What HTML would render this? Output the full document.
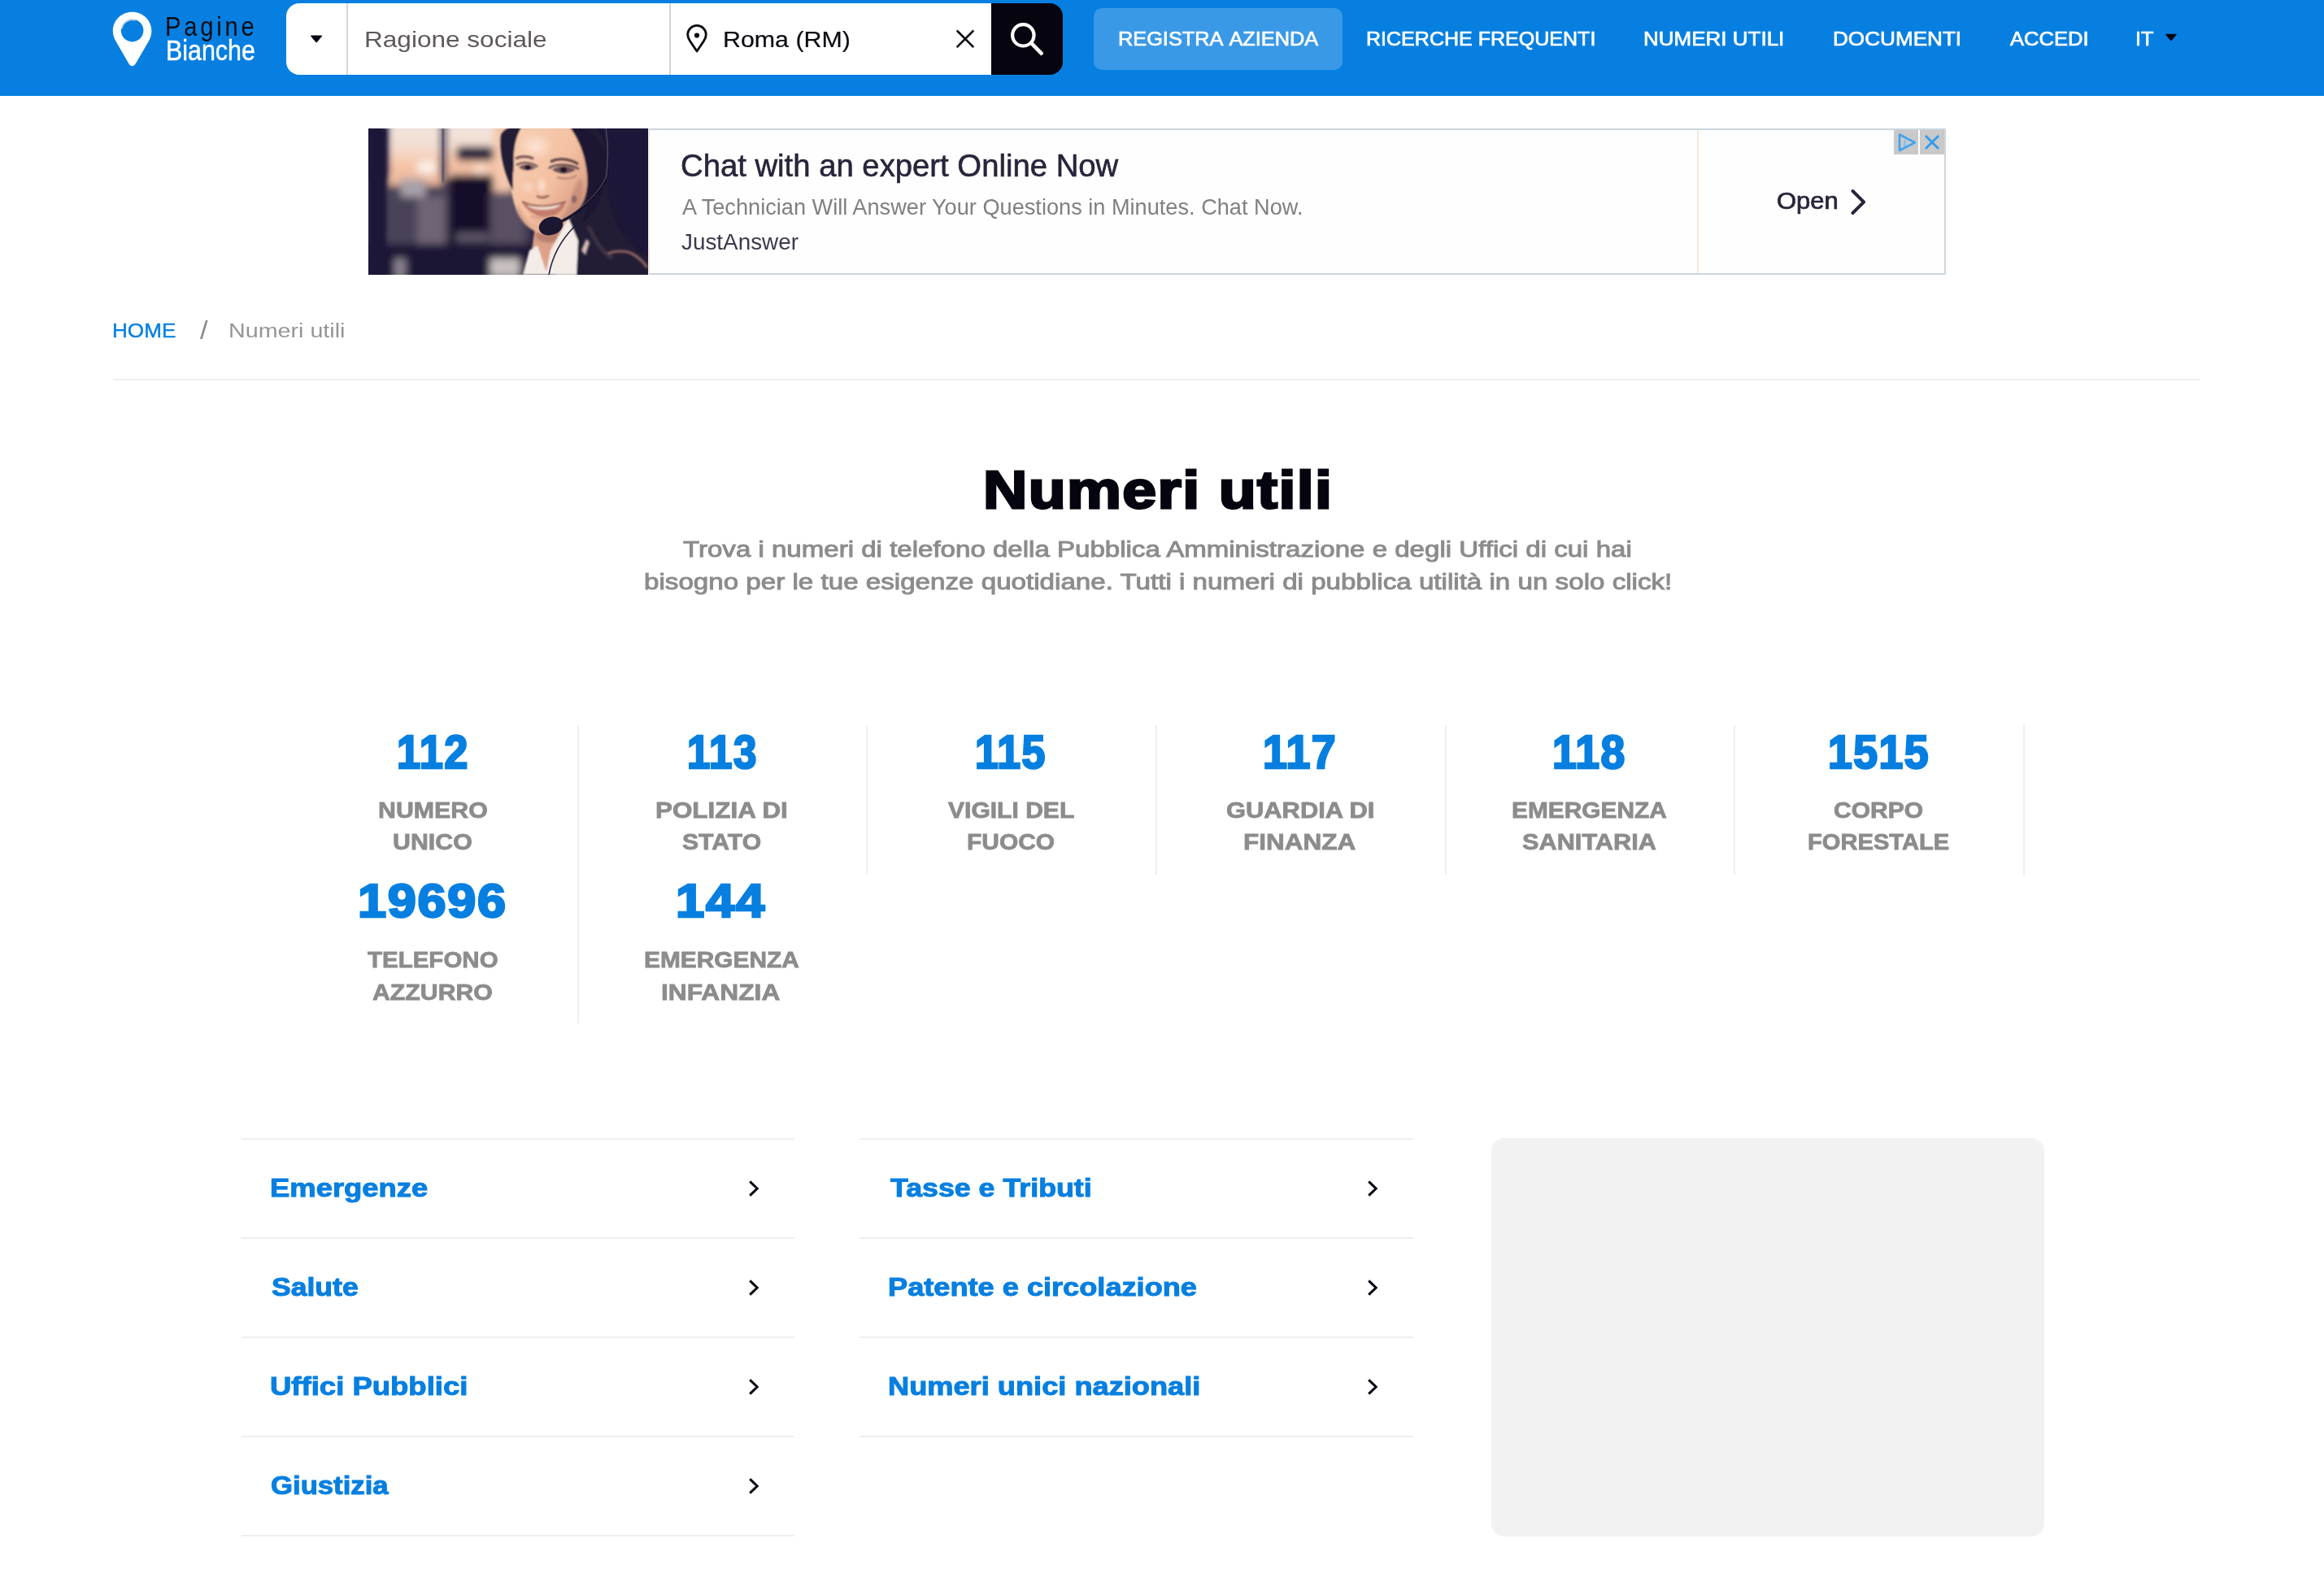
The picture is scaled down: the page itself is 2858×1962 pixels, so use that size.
<!DOCTYPE html>
<html lang="it"><head><meta charset="utf-8"><title>Numeri utili - PagineBianche</title>
<style>
*{margin:0;padding:0;box-sizing:border-box}
html,body{width:2858px;height:1962px;overflow:hidden;background:#fff}
@media (max-width:1600px){html{zoom:.5}}
body{position:relative;font-family:"Liberation Sans",sans-serif}
.a{position:absolute}
.t{position:absolute;white-space:nowrap;transform-origin:0 50%;display:block}
.hl{position:absolute;height:2px;background:#efefef}
.vl{position:absolute;width:2px;background:#efefef}
svg{position:absolute;overflow:visible}
</style></head>
<body>
<header class="a" style="left:0;top:0;width:2858px;height:118px;background:#067fe0">
<svg style="left:130px;top:8px" width="70" height="84" viewBox="130 8 70 84">
<path d="M162.6 14.7c-13.2 0-23.8 10.4-23.8 23.4 0 5.2 1.7 9.3 4.2 13.6l15.2 26.3c1 1.8 2.6 3.2 4.4 3.2s3.4-1.4 4.4-3.2l15.2-26.3c2.500-4.300 4.200-8.400 4.200-13.600 0-13-10.600-23.400-23.800-23.400z" fill="#fff"/>
<circle cx="162.6" cy="37.6" r="13.8" fill="#067fe0"/>
<path d="M149.6 35.5a13.6 13.6 0 0 1 17-10.800" fill="none" stroke="#c9d4de" stroke-width="1.6"/>
</svg>
<div class="a" style="left:352px;top:4px;width:868px;height:88px;background:#fff;border-radius:16px 0 0 16px"></div>
<div class="a" style="left:1219px;top:4px;width:88px;height:88px;background:#06040f;border-radius:0 16px 16px 0"></div>
<div class="a" style="left:426px;top:4px;width:2px;height:88px;background:#d1d7de"></div>
<div class="a" style="left:823px;top:4px;width:2px;height:88px;background:#d1d7de"></div>
<svg style="left:380px;top:42px" width="18" height="12" viewBox="380 42 18 12"><path d="M383 44.200h12.200l-6.100 7.300z" fill="#06040f" stroke="#06040f" stroke-width="1.6" stroke-linejoin="round"/></svg>
<svg style="left:840px;top:26px" width="34" height="44" viewBox="840 26 34 44">
<path d="M857 31.400c-6.300 0-11.300 5-11.300 11.200 0 3.400 1.400 5.700 3 8.100l8.300 12.300 8.300-12.300c1.600-2.400 3-4.700 3-8.100 0-6.200-5-11.200-11.300-11.200z" fill="none" stroke="#0b0b12" stroke-width="2.800" stroke-linejoin="round"/>
<circle cx="857" cy="43.500" r="3.100" fill="#0b0b12"/></svg>
<svg style="left:1170px;top:32px" width="34" height="32" viewBox="1170 32 34 32"><path d="M1176.700 37.500l20.600 20.600M1197.300 37.500l-20.600 20.600" stroke="#0b0b12" stroke-width="2.600" fill="none"/></svg>
<svg style="left:1236px;top:24px" width="56" height="52" viewBox="1236 24 56 52"><circle cx="1258.300" cy="43.300" r="13.200" fill="none" stroke="#fff" stroke-width="4.200"/><path d="M1268.300 53l12.300 12.700" stroke="#fff" stroke-width="4.600" stroke-linecap="round"/></svg>
<div class="a" style="left:1345px;top:10px;width:306px;height:76px;border-radius:10px;background:#3a99e7"></div>
<svg style="left:2660px;top:40px" width="20" height="12" viewBox="2660 40 20 12"><path d="M2663.800 42.400h12.200l-6.100 7.200z" fill="#06040f" stroke="#06040f" stroke-width="1.400" stroke-linejoin="round"/></svg>
<nav>
<span class="t" style="left:203.36px;top:15.53px;font-size:33.87px;line-height:33.87px;color:#0b0b12;letter-spacing:4.432px;transform:scaleX(0.8600);">Pagine</span>
<span class="t" style="left:203.64px;top:44.30px;font-size:35.32px;line-height:35.32px;color:#ffffff;-webkit-text-stroke:0.5px #ffffff;transform:scaleX(0.8606);">Bianche</span>
<span class="t" style="left:447.97px;top:33.68px;font-size:28.49px;line-height:28.49px;color:#5f585b;transform:scaleX(1.1079);">Ragione sociale</span>
<span class="t" style="left:889.28px;top:34.23px;font-size:28.2px;line-height:28.2px;color:#0b0b12;-webkit-text-stroke:0.2px #0b0b12;transform:scaleX(1.0774);">Roma (RM)</span>
<span class="t" style="left:1374.51px;top:36.64px;font-size:23.69px;line-height:23.69px;color:#ffffff;-webkit-text-stroke:0.7px #ffffff;transform:scaleX(1.0689);font-kerning:none;">REGISTRA AZIENDA</span>
<span class="t" style="left:1680.34px;top:36.64px;font-size:23.69px;line-height:23.69px;color:#ffffff;-webkit-text-stroke:0.7px #ffffff;transform:scaleX(1.0569);font-kerning:none;">RICERCHE FREQUENTI</span>
<span class="t" style="left:2021.06px;top:36.64px;font-size:23.69px;line-height:23.69px;color:#ffffff;-webkit-text-stroke:0.7px #ffffff;transform:scaleX(1.0974);font-kerning:none;">NUMERI UTILI</span>
<span class="t" style="left:2253.66px;top:36.64px;font-size:23.69px;line-height:23.69px;color:#ffffff;-webkit-text-stroke:0.7px #ffffff;transform:scaleX(1.1023);font-kerning:none;">DOCUMENTI</span>
<span class="t" style="left:2471.73px;top:36.64px;font-size:23.69px;line-height:23.69px;color:#ffffff;-webkit-text-stroke:0.7px #ffffff;transform:scaleX(1.0792);font-kerning:none;">ACCEDI</span>
<span class="t" style="left:2626.33px;top:36.64px;font-size:23.69px;line-height:23.69px;color:#ffffff;-webkit-text-stroke:0.7px #ffffff;transform:scaleX(1.0649);font-kerning:none;">IT</span>
</nav>
</header>
<main>
<aside>
<div class="a" style="left:797px;top:158px;width:1596px;height:180px;border:2px solid #ccd5de;border-left:2px solid #f6e6dc;background:#fefefe"></div>
<div class="a" style="left:2087px;top:160px;width:2px;height:176px;background:#f6e8df"></div>
<div class="a" style="left:453px;top:158px;width:344px;height:180px;background:#1c1838;overflow:hidden"><svg style="left:0;top:0" width="344" height="180" viewBox="0 0 344 180">
<defs>
<filter id="b6" x="-20%" y="-20%" width="140%" height="140%"><feGaussianBlur stdDeviation="5"/></filter>
<filter id="b3" x="-20%" y="-20%" width="140%" height="140%"><feGaussianBlur stdDeviation="2.500"/></filter>
<filter id="b2" x="-20%" y="-20%" width="140%" height="140%"><feGaussianBlur stdDeviation="1.800"/></filter>
<filter id="b1" x="-20%" y="-20%" width="140%" height="140%"><feGaussianBlur stdDeviation="0.900"/></filter>
<linearGradient id="win" x1="0" y1="0" x2="0" y2="1"><stop offset="0" stop-color="#f1e7e1"/><stop offset=".42" stop-color="#f3dccf"/><stop offset=".68" stop-color="#f6c4a6"/><stop offset="1" stop-color="#e9b79d"/></linearGradient>
<linearGradient id="face" x1="0" y1="0" x2="1" y2=".9"><stop offset="0" stop-color="#f8cfb4"/><stop offset=".55" stop-color="#f3c0a1"/><stop offset="1" stop-color="#cf9079"/></linearGradient>
<radialGradient id="hl" cx=".5" cy=".5" r=".5"><stop offset="0" stop-color="#fde6d8" stop-opacity=".9"/><stop offset="1" stop-color="#fde6d8" stop-opacity="0"/></radialGradient>
</defs>
<rect width="344" height="180" fill="#1b1739"/>
<!-- blurred office background -->
<g filter="url(#b6)">
<rect x="0" y="60" width="200" height="90" fill="#4a4258"/>
<rect x="24" y="-8" width="66" height="78" fill="url(#win)"/>
<rect x="95" y="-8" width="60" height="70" fill="url(#win)"/>
<rect x="154" y="-8" width="24" height="86" fill="#f4c8ad"/>
<rect x="108" y="22" width="46" height="18" rx="6" fill="#1f1a3a"/>
<ellipse cx="72" cy="48" rx="13" ry="9" fill="#fbeee6"/>
<ellipse cx="138" cy="50" rx="9" ry="7" fill="#f9dcc8"/>
<rect x="40" y="62" width="30" height="22" fill="#a8a0a8"/>
<rect x="99" y="57" width="55" height="90" rx="6" fill="#120e2c"/>
<rect x="60" y="84" width="34" height="60" fill="#6f6474"/>
<rect x="150" y="80" width="40" height="66" fill="#5a5064"/>
<rect x="0" y="142" width="200" height="50" fill="#1a1536"/>
<rect x="150" y="160" width="36" height="22" fill="#c9c1c0"/>
<rect x="32" y="160" width="14" height="24" fill="#8a8290"/>
<rect x="108" y="128" width="40" height="12" fill="#5c5366"/>
</g>
<rect x="0" y="0" width="22" height="180" fill="#1b1739" filter="url(#b3)"/>
<rect x="90.500" y="0" width="2.500" height="66" fill="#4d4860" filter="url(#b1)"/>
<g filter="url(#b1)">
<!-- hair mass behind -->
<path d="M164 10c2-8 12-14 26-14h76c18 0 28 18 28 44 0 26 4 46 12 66 8 20 18 34 38 52v30h-112l-14-62-30-38c-14-18-26-52-24-78z" fill="#221c34"/>
<path d="M296 70c4 30 14 60 44 84v-154h-50c4 20 4 46 6 70z" fill="#1b1739" filter="url(#b3)"/>
<!-- neck -->
<path d="M205 120l38-8 12 68h-58z" fill="#dda187"/>
<path d="M205 126c10 6 24 4 36-8l2 16c-12 8-26 8-36 2z" fill="#b87f6c" filter="url(#b2)"/>
<!-- collar -->
<path d="M190 180l8-30 10-6 12 36z" fill="#f4ece7"/>
<path d="M218 180l6-30 22-40 12 28-2 42z" fill="#f4ece7"/>
<!-- face -->
<path d="M179 43c-1-16 2-32 9-44h62c10 10 18 26 19 44 1 12 1 24-1 35-2 10-6 18-12 24-6 6-12 10-18 12l-12 12c-5 3-12 4-18 2-8-3-16-10-22-20-6-10-8-20-10-30-1-10 3-22 3-35z" fill="url(#face)"/>
<ellipse cx="206" cy="22" rx="22" ry="18" fill="url(#hl)"/>
<ellipse cx="213" cy="70" rx="7" ry="12" fill="url(#hl)"/>
<ellipse cx="196" cy="72" rx="10" ry="8" fill="url(#hl)" opacity=".6"/>
<!-- cheek shadow right -->
<path d="M262 60c4 14 2 30-6 42-6 8-14 12-22 14 8-10 14-20 16-32 2-10 6-18 12-24z" fill="#b9806e" opacity=".55" filter="url(#b2)"/>
<path d="M184 92c4 12 12 24 22 32-10-2-20-10-24-22z" fill="#c58c78" opacity=".5" filter="url(#b2)"/>
<!-- hair strands front -->
<path d="M163 8c4-8 14-12 28-12-8 8-12 20-13 34-1 14 0 30 0 46-8-14-18-42-15-68z" fill="#241d36"/>
<path d="M246-4c22 2 40 12 44 36 3 20 2 44-10 66-4 8-10 14-18 18 6-12 8-26 8-40 0-30-6-56-24-80z" fill="#1f1930"/>
</g>
<!-- eyes brows nose mouth -->
<g filter="url(#b1)">
<path d="M181 37c7-3 15-3 22 0" stroke="#6b4a4a" stroke-width="2.600" fill="none"/>
<path d="M185 47.500c5-4 14-4 21 .5-5 4-16 5-21-.5z" fill="#5a4048" opacity=".85"/>
<ellipse cx="196" cy="48" rx="3.600" ry="3" fill="#1f1626"/>
<path d="M182 45c6-4 18-4 26 2" stroke="#2a1f2e" stroke-width="1.600" fill="none"/>
<path d="M224 41c10-5 24-4 34 3" stroke="#5a3d42" stroke-width="3" fill="none"/>
<path d="M226 50.500c7-5.500 20-5.500 29 0-7 6-21 7-29 0z" fill="#5a4048" opacity=".85"/>
<ellipse cx="240" cy="51" rx="4.200" ry="3.400" fill="#1f1626"/>
<path d="M222 49c8-6 26-6 37 1" stroke="#2a1f2e" stroke-width="1.800" fill="none"/>
<path d="M232 60c8 3 18 2 24-2" stroke="#a36d62" stroke-width="2" fill="none" opacity=".8"/>
<path d="M207 83c4 2.500 10 2.500 15-.5" stroke="#8f5e55" stroke-width="2.400" fill="none"/>
<path d="M189 90c8 5 18 6 26 5 10-1 20-2 27-4-2 10-12 18-24 18s-24-8-29-19z" fill="#c47c6c"/>
<path d="M195 94c14 4 28 3 42-1-4 5-12 7-22 7s-16-2-20-6z" fill="#f2d9cf"/>
<path d="M189 90c10 5 22 6 32 5 8-1 15-2 22-5" stroke="#7a4a48" stroke-width="1.400" fill="none"/>
<path d="M200 108c8 3 18 3 26-1" stroke="#d89c88" stroke-width="3" fill="none" opacity=".8"/>
<ellipse cx="253" cy="87" rx="3" ry="4.500" fill="#5a4450" opacity=".55"/>
</g>
<!-- headset -->
<path d="M292 0c3 20 3 42 0 62" stroke="#4a445c" stroke-width="1.600" fill="none"/>
<path d="M236 115c22-10 46-32 56-53" stroke="#15112a" stroke-width="3.200" fill="none"/>
<path d="M238 112c20-10 44-30 53-50" stroke="#6a6278" stroke-width=".9" fill="none"/>
<ellipse cx="224.500" cy="120" rx="15" ry="11" transform="rotate(-16 224.500 120)" fill="#1b1631"/>
<path d="M222 180c4-22 14-42 32-60" stroke="#1a1530" stroke-width="1.500" fill="none"/>
<g filter="url(#b2)">
<path d="M294 154c10-4 22-4 30 0 8 4 14 10 19 17" stroke="#a8766c" stroke-width="2.600" fill="none"/>
<path d="M270 120c8 14 14 30 30 40" stroke="#4a3a4a" stroke-width="5" fill="none" opacity=".7"/>
<path d="M262 150l6-14 4 4-5 16z" fill="#d8c0b8"/>
</g>
</svg>
</div>
<div class="a" style="left:2329px;top:160px;width:30px;height:30px;background:#c9c9c9"></div>
<div class="a" style="left:2361px;top:160px;width:30px;height:30px;background:#c9c9c9"></div>
<svg style="left:2329px;top:160px" width="62" height="30" viewBox="0 0 62 30"><path d="M7 5.500v19.500l19-9.700z" fill="none" stroke="#3ea2f0" stroke-width="2.600" stroke-linejoin="round"/><path d="M13.500 12v8" stroke="#7cc0f5" stroke-width="2.400"/><path d="M39 7l16 16M55 7l-16 16" stroke="#2f9cf0" stroke-width="2.800"/></svg>
<svg style="left:2270px;top:228px" width="30" height="40" viewBox="2270 228 30 40"><path d="M2278.500 235l13.500 13.500-13.500 13.500" fill="none" stroke="#27253a" stroke-width="4" stroke-linecap="round" stroke-linejoin="round"/></svg>
<span class="t" style="left:837.36px;top:183.96px;font-size:39.68px;line-height:39.68px;color:#27253a;-webkit-text-stroke:0.6px #27253a;transform:scaleX(0.9647);">Chat with an expert Online Now</span>
<span class="t" style="left:839.03px;top:239.88px;font-size:28.49px;line-height:28.49px;color:#808080;transform:scaleX(0.9536);">A Technician Will Answer Your Questions in Minutes. Chat Now.</span>
<span class="t" style="left:838.27px;top:282.88px;font-size:28.49px;line-height:28.49px;color:#3b3a4d;transform:scaleX(0.9780);">JustAnswer</span>
<span class="t" style="left:2184.88px;top:231.67px;font-size:29.8px;line-height:29.8px;color:#27253a;-webkit-text-stroke:0.7px #27253a;transform:scaleX(1.0403);">Open</span>
</aside>
<nav>
<span class="t" style="left:138.36px;top:395.15px;font-size:23.98px;line-height:23.98px;color:#067fe0;-webkit-text-stroke:0.4px #067fe0;transform:scaleX(1.0893);">HOME</span>
<span class="t" style="left:245.51px;top:390.78px;font-size:30.5px;line-height:30.5px;color:#8a8a8a;transform:scaleX(1.1312);">/</span>
<span class="t" style="left:281.04px;top:394.61px;font-size:24.56px;line-height:24.56px;color:#959595;transform:scaleX(1.1683);">Numeri utili</span>
<div class="hl" style="left:139px;top:466px;width:2567px"></div>
</nav>
<section>
<span class="t" style="left:1209.31px;top:569.56px;font-size:65.41px;line-height:65.41px;color:#05050f;font-weight:700;-webkit-text-stroke:2.8px #05050f;letter-spacing:1.200px;transform:scaleX(1.1502);">Numeri utili</span>
<span class="t" style="left:839.64px;top:661.98px;font-size:27.11px;line-height:27.11px;color:#8c8c8c;-webkit-text-stroke:0.95px #8c8c8c;transform:scaleX(1.2194);">Trova i numeri di telefono della Pubblica Amministrazione e degli Uffici di cui hai</span>
<span class="t" style="left:791.87px;top:701.58px;font-size:27.11px;line-height:27.11px;color:#8c8c8c;-webkit-text-stroke:0.95px #8c8c8c;transform:scaleX(1.2230);">bisogno per le tue esigenze quotidiane. Tutti i numeri di pubblica utilità in un solo click!</span>
</section>
<section>
<div class="vl" style="left:709.7px;top:892.4px;height:367px"></div>
<div class="vl" style="left:1065.3px;top:892.4px;height:183.5px"></div>
<div class="vl" style="left:1421.0px;top:892.4px;height:183.5px"></div>
<div class="vl" style="left:1776.7px;top:892.4px;height:183.5px"></div>
<div class="vl" style="left:2132.4px;top:892.4px;height:183.5px"></div>
<div class="vl" style="left:2488.0px;top:892.4px;height:183.5px"></div>
<span class="t" style="left:487.63px;top:896.62px;font-size:57.56px;line-height:57.56px;color:#067fe0;font-weight:700;-webkit-text-stroke:2.6px #067fe0;letter-spacing:1.600px;transform:scaleX(0.9090);">112</span>
<span class="t" style="left:464.57px;top:983.10px;font-size:27.76px;line-height:27.76px;color:#8c8c8c;font-weight:700;-webkit-text-stroke:0.8px #8c8c8c;transform:scaleX(1.0926);">NUMERO</span>
<span class="t" style="left:483.21px;top:1022.30px;font-size:27.76px;line-height:27.76px;color:#8c8c8c;font-weight:700;-webkit-text-stroke:0.8px #8c8c8c;transform:scaleX(1.0932);">UNICO</span>
<span class="t" style="left:845.02px;top:896.62px;font-size:57.56px;line-height:57.56px;color:#067fe0;font-weight:700;-webkit-text-stroke:2.6px #067fe0;letter-spacing:1.600px;transform:scaleX(0.8889);">113</span>
<span class="t" style="left:806.46px;top:983.10px;font-size:27.76px;line-height:27.76px;color:#8c8c8c;font-weight:700;-webkit-text-stroke:0.8px #8c8c8c;transform:scaleX(1.1316);">POLIZIA DI</span>
<span class="t" style="left:838.90px;top:1022.30px;font-size:27.76px;line-height:27.76px;color:#8c8c8c;font-weight:700;-webkit-text-stroke:0.8px #8c8c8c;transform:scaleX(1.0872);">STATO</span>
<span class="t" style="left:1198.93px;top:896.62px;font-size:57.56px;line-height:57.56px;color:#067fe0;font-weight:700;-webkit-text-stroke:2.6px #067fe0;letter-spacing:1.600px;transform:scaleX(0.8995);">115</span>
<span class="t" style="left:1166.07px;top:983.10px;font-size:27.76px;line-height:27.76px;color:#8c8c8c;font-weight:700;-webkit-text-stroke:0.8px #8c8c8c;transform:scaleX(1.0827);">VIGILI DEL</span>
<span class="t" style="left:1189.21px;top:1022.30px;font-size:27.76px;line-height:27.76px;color:#8c8c8c;font-weight:700;-webkit-text-stroke:0.8px #8c8c8c;transform:scaleX(1.0791);">FUOCO</span>
<span class="t" style="left:1553.23px;top:896.62px;font-size:57.56px;line-height:57.56px;color:#067fe0;font-weight:700;-webkit-text-stroke:2.6px #067fe0;letter-spacing:1.600px;transform:scaleX(0.9332);">117</span>
<span class="t" style="left:1507.63px;top:983.10px;font-size:27.76px;line-height:27.76px;color:#8c8c8c;font-weight:700;-webkit-text-stroke:0.8px #8c8c8c;transform:scaleX(1.1128);">GUARDIA DI</span>
<span class="t" style="left:1528.82px;top:1022.30px;font-size:27.76px;line-height:27.76px;color:#8c8c8c;font-weight:700;-webkit-text-stroke:0.8px #8c8c8c;transform:scaleX(1.1358);">FINANZA</span>
<span class="t" style="left:1909.01px;top:896.62px;font-size:57.56px;line-height:57.56px;color:#067fe0;font-weight:700;-webkit-text-stroke:2.6px #067fe0;letter-spacing:1.600px;transform:scaleX(0.9287);">118</span>
<span class="t" style="left:1858.98px;top:983.10px;font-size:27.76px;line-height:27.76px;color:#8c8c8c;font-weight:700;-webkit-text-stroke:0.8px #8c8c8c;transform:scaleX(1.0758);">EMERGENZA</span>
<span class="t" style="left:1871.54px;top:1022.30px;font-size:27.76px;line-height:27.76px;color:#8c8c8c;font-weight:700;-webkit-text-stroke:0.8px #8c8c8c;transform:scaleX(1.1069);">SANITARIA</span>
<span class="t" style="left:2247.63px;top:896.62px;font-size:57.56px;line-height:57.56px;color:#067fe0;font-weight:700;-webkit-text-stroke:2.6px #067fe0;letter-spacing:1.600px;transform:scaleX(0.9311);">1515</span>
<span class="t" style="left:2254.63px;top:983.10px;font-size:27.76px;line-height:27.76px;color:#8c8c8c;font-weight:700;-webkit-text-stroke:0.8px #8c8c8c;transform:scaleX(1.0834);">CORPO</span>
<span class="t" style="left:2222.80px;top:1022.30px;font-size:27.76px;line-height:27.76px;color:#8c8c8c;font-weight:700;-webkit-text-stroke:0.8px #8c8c8c;transform:scaleX(1.0500);">FORESTALE</span>
<span class="t" style="left:439.98px;top:1080.02px;font-size:57.56px;line-height:57.56px;color:#067fe0;font-weight:700;-webkit-text-stroke:2.6px #067fe0;letter-spacing:1.600px;transform:scaleX(1.0945);">19696</span>
<span class="t" style="left:451.74px;top:1166.50px;font-size:27.76px;line-height:27.76px;color:#8c8c8c;font-weight:700;-webkit-text-stroke:0.8px #8c8c8c;transform:scaleX(1.0628);">TELEFONO</span>
<span class="t" style="left:458.49px;top:1206.70px;font-size:27.76px;line-height:27.76px;color:#8c8c8c;font-weight:700;-webkit-text-stroke:0.8px #8c8c8c;transform:scaleX(1.0900);">AZZURRO</span>
<span class="t" style="left:831.41px;top:1080.02px;font-size:57.56px;line-height:57.56px;color:#067fe0;font-weight:700;-webkit-text-stroke:2.6px #067fe0;letter-spacing:1.600px;transform:scaleX(1.1015);">144</span>
<span class="t" style="left:791.94px;top:1166.50px;font-size:27.76px;line-height:27.76px;color:#8c8c8c;font-weight:700;-webkit-text-stroke:0.8px #8c8c8c;transform:scaleX(1.0758);">EMERGENZA</span>
<span class="t" style="left:813.45px;top:1206.70px;font-size:27.76px;line-height:27.76px;color:#8c8c8c;font-weight:700;-webkit-text-stroke:0.8px #8c8c8c;transform:scaleX(1.1435);">INFANZIA</span>
</section>
<section>
<div class="hl" style="left:297px;top:1400px;width:680px"></div>
<div class="hl" style="left:297px;top:1522px;width:680px"></div>
<div class="hl" style="left:297px;top:1644px;width:680px"></div>
<div class="hl" style="left:297px;top:1766px;width:680px"></div>
<div class="hl" style="left:297px;top:1888px;width:680px"></div>
<div class="hl" style="left:1058px;top:1400px;width:680px"></div>
<div class="hl" style="left:1058px;top:1522px;width:680px"></div>
<div class="hl" style="left:1058px;top:1644px;width:680px"></div>
<div class="hl" style="left:1058px;top:1766px;width:680px"></div>
<svg style="left:917px;top:1448.2px" width="20" height="28" viewBox="917 1448.2 20 28"><path d="M922.2 1453.5l9 8.700-9 8.700" fill="none" stroke="#06040f" stroke-width="3" /></svg>
<svg style="left:917px;top:1570.2px" width="20" height="28" viewBox="917 1570.2 20 28"><path d="M922.2 1575.5l9 8.700-9 8.700" fill="none" stroke="#06040f" stroke-width="3" /></svg>
<svg style="left:917px;top:1692.2px" width="20" height="28" viewBox="917 1692.2 20 28"><path d="M922.2 1697.5l9 8.700-9 8.700" fill="none" stroke="#06040f" stroke-width="3" /></svg>
<svg style="left:917px;top:1814.2px" width="20" height="28" viewBox="917 1814.2 20 28"><path d="M922.2 1819.5l9 8.700-9 8.700" fill="none" stroke="#06040f" stroke-width="3" /></svg>
<svg style="left:1678px;top:1448.2px" width="20" height="28" viewBox="1678 1448.2 20 28"><path d="M1683.2 1453.5l9 8.700-9 8.700" fill="none" stroke="#06040f" stroke-width="3" /></svg>
<svg style="left:1678px;top:1570.2px" width="20" height="28" viewBox="1678 1570.2 20 28"><path d="M1683.2 1575.5l9 8.700-9 8.700" fill="none" stroke="#06040f" stroke-width="3" /></svg>
<svg style="left:1678px;top:1692.2px" width="20" height="28" viewBox="1678 1692.2 20 28"><path d="M1683.2 1697.5l9 8.700-9 8.700" fill="none" stroke="#06040f" stroke-width="3" /></svg>
<span class="t" style="left:331.78px;top:1447.49px;font-size:30.96px;line-height:30.96px;color:#067fe0;font-weight:700;-webkit-text-stroke:1.0px #067fe0;transform:scaleX(1.1758);">Emergenze</span>
<span class="t" style="left:333.63px;top:1569.49px;font-size:30.96px;line-height:30.96px;color:#067fe0;font-weight:700;-webkit-text-stroke:1.0px #067fe0;transform:scaleX(1.1488);">Salute</span>
<span class="t" style="left:332.48px;top:1691.49px;font-size:30.96px;line-height:30.96px;color:#067fe0;font-weight:700;-webkit-text-stroke:1.0px #067fe0;transform:scaleX(1.1795);">Uffici Pubblici</span>
<span class="t" style="left:332.89px;top:1813.49px;font-size:30.96px;line-height:30.96px;color:#067fe0;font-weight:700;-webkit-text-stroke:1.0px #067fe0;transform:scaleX(1.1209);">Giustizia</span>
<span class="t" style="left:1094.78px;top:1447.49px;font-size:30.96px;line-height:30.96px;color:#067fe0;font-weight:700;-webkit-text-stroke:1.0px #067fe0;transform:scaleX(1.1547);">Tasse e Tributi</span>
<span class="t" style="left:1092.41px;top:1569.49px;font-size:30.96px;line-height:30.96px;color:#067fe0;font-weight:700;-webkit-text-stroke:1.0px #067fe0;transform:scaleX(1.1686);">Patente e circolazione</span>
<span class="t" style="left:1092.40px;top:1691.49px;font-size:30.96px;line-height:30.96px;color:#067fe0;font-weight:700;-webkit-text-stroke:1.0px #067fe0;transform:scaleX(1.1700);">Numeri unici nazionali</span>
<div class="a" style="left:1834px;top:1400px;width:680px;height:490px;border-radius:16px;background:#f2f2f2"></div>
</section>
</main>
</body></html>
